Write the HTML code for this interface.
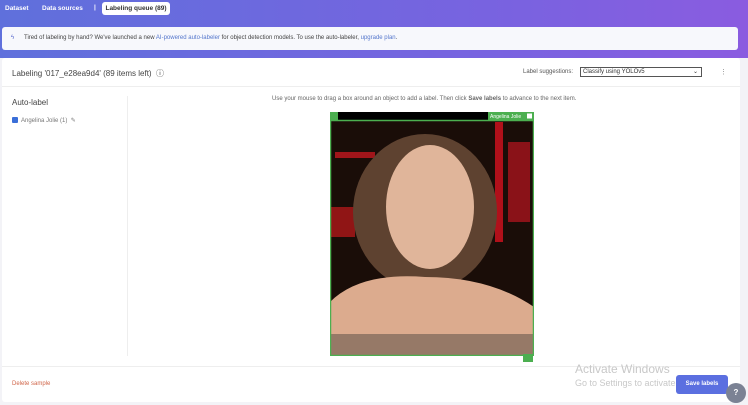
<!DOCTYPE html>
<html><head><style>
*{margin:0;padding:0;box-sizing:border-box}
body{width:748px;height:405px;overflow:hidden;background:#f3f3f7;font-family:"Liberation Sans",sans-serif;position:relative;color:#333}
.hdr{position:absolute;left:0;top:0;width:748px;height:58px;background:linear-gradient(90deg,#5f70dc,#7a62e0 70%,#8a5ce0)}
.nav{position:absolute;top:5px;font-size:6.5px;color:#fff;font-weight:bold}
.tab{position:absolute;left:102px;top:2px;width:68px;height:13px;background:#fff;border-radius:3px;color:#333;font-size:6.5px;font-weight:bold;line-height:13px;text-align:center}
.banner{position:absolute;left:2px;top:27px;width:736px;height:23px;background:#f7f8fc;border-radius:3px;font-size:6px;color:#444;line-height:23px;padding-left:22px}
.banner a{color:#5577cc}
.card{position:absolute;left:2px;top:58px;width:738px;height:344px;background:#fff;border-radius:3px}
.t{position:absolute;font-size:7px}
.sel{position:absolute;left:580px;top:67px;width:122px;height:10px;border:1px solid #555;font-size:6px;line-height:8px;padding-left:2px}
</style></head><body>
<div class="hdr"></div>
<div class="nav" style="left:5px">Dataset</div>
<div class="nav" style="left:42px">Data sources</div>
<div class="nav" style="left:94px;top:4px">|</div>
<div class="tab">Labeling queue (89)</div>
<div class="banner"><span style="position:absolute;left:9px;color:#5566cc">ϟ</span>Tired of labeling by hand? We've launched a new <a>AI-powered auto-labeler</a> for object detection models. To use the auto-labeler, <a>upgrade plan</a>.</div>
<div class="card">
<div style="position:absolute;left:0;top:28px;width:738px;border-top:1px solid #eee"></div>
<div style="position:absolute;left:125px;top:38px;height:260px;border-left:1px solid #eee"></div>
<div style="position:absolute;left:0;top:308px;width:738px;border-top:1px solid #eee"></div>
</div>
<div class="t" style="left:12px;top:68px;font-size:8px;color:#444">Labeling '017_e28ea9d4' (89 items left) &nbsp;ⓘ</div>
<div class="t" style="left:523px;top:69px;font-size:6px;color:#555">Label suggestions:</div>
<div class="sel">Classify using YOLOv5<span style="position:absolute;right:3px">⌄</span></div>
<div class="t" style="left:720px;top:68px;color:#888">⋮</div>
<div class="t" style="left:12px;top:98px;font-size:8px;color:#444">Auto-label</div>
<div style="position:absolute;left:12px;top:117px;width:6px;height:6px;background:#3a6fd8;border-radius:1px"></div>
<div class="t" style="left:21px;top:117px;font-size:6px;color:#777">Angelina Jolie (1) &nbsp;✎</div>
<div class="t" style="left:272px;top:96px;font-size:6px;color:#666">Use your mouse to drag a box around an object to add a label. Then click <b>Save labels</b> to advance to the next item.</div>
<svg style="position:absolute;left:330px;top:112px" width="204" height="244" viewBox="0 0 204 244">
<rect width="204" height="244" fill="#1a0d08"/>
<rect x="0" y="0" width="204" height="8" fill="#000"/>
<rect x="165" y="10" width="8" height="120" fill="#b0101a"/>
<rect x="178" y="30" width="22" height="80" fill="#8a1218"/>
<rect x="5" y="40" width="40" height="6" fill="#a0151a"/>
<rect x="0" y="95" width="25" height="30" fill="#901515"/>
<ellipse cx="95" cy="100" rx="72" ry="78" fill="#5e4230"/>
<ellipse cx="100" cy="95" rx="44" ry="62" fill="#e0b59a"/>
<path d="M0 190 Q30 160 95 165 Q160 165 204 195 L204 244 L0 244Z" fill="#dcab8e"/>
<rect x="0" y="222" width="204" height="22" fill="#8a7060" opacity=".85"/>
<rect x="0.5" y="8.5" width="203" height="235" fill="none" stroke="#4caf50" stroke-width="1.5"/>
<rect x="0" y="0" width="8" height="8" fill="#4caf50"/>
<rect x="158" y="0" width="46" height="8" fill="#4caf50"/>
<text x="160" y="6" font-size="5" fill="#fff" font-family="Liberation Sans">Angelina Jolie</text>
<rect x="197" y="1.5" width="5" height="5" fill="#fff"/>
</svg>
<div style="position:absolute;left:523px;top:354px;width:10px;height:8px;background:#4caf50"></div>
<div class="t" style="left:12px;top:381px;font-size:6px;color:#d0664a">Delete sample</div>
<div class="t" style="left:575px;top:362px;font-size:12px;color:#c8c8c8">Activate Windows</div>
<div class="t" style="left:575px;top:378px;font-size:9px;color:#c8c8c8">Go to Settings to activate Windows.</div>
<div style="position:absolute;left:676px;top:375px;width:52px;height:19px;background:#5b6fe0;border-radius:3px;color:#fff;font-size:6px;font-weight:bold;text-align:center;line-height:19px">Save labels</div>
<div style="position:absolute;left:726px;top:383px;width:20px;height:20px;background:#7b8294;border-radius:50%;color:#fff;font-size:8px;font-weight:bold;text-align:center;line-height:20px">?</div>
</body></html>
